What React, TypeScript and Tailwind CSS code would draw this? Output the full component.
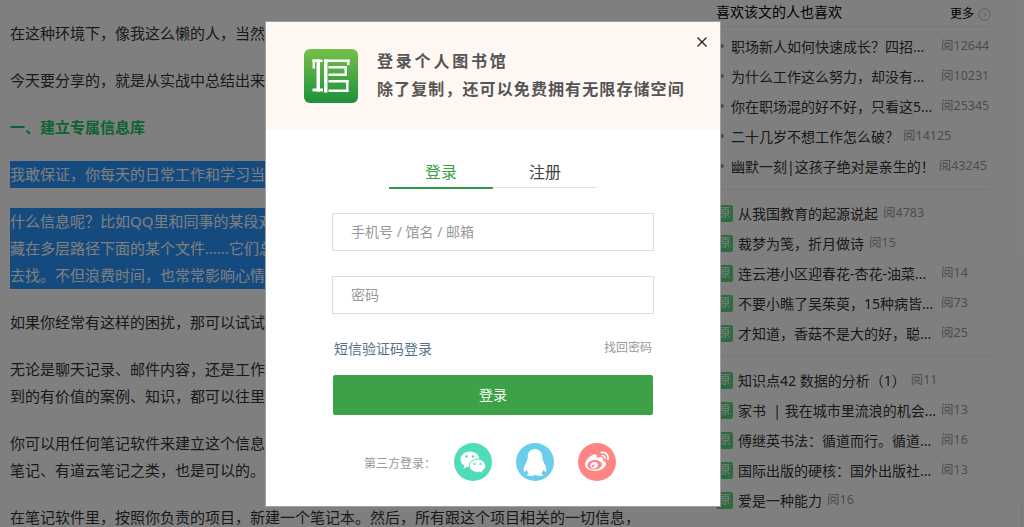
import { FaWeibo } from "react-icons/fa";

const fontStack = "font-['Noto_Sans','Noto_Sans_CJK_SC',sans-serif]";

type Item = { title: string; read: string; cut?: boolean };

const liked: Item[] = [
  { title: "职场新人如何快速成长？四招...", read: "阅12644", cut: true },
  { title: "为什么工作这么努力，却没有...", read: "阅10231", cut: true },
  { title: "你在职场混的好不好，只看这5...", read: "阅25345", cut: true },
  { title: "二十几岁不想工作怎么破？", read: "阅14125" },
  { title: "幽默一刻|这孩子绝对是亲生的！", read: "阅43245" },
];

const originalsA: Item[] = [
  { title: "从我国教育的起源说起", read: "阅4783" },
  { title: "裁梦为笺，折月做诗", read: "阅15" },
  { title: "连云港小区迎春花-杏花-油菜...", read: "阅14", cut: true },
  { title: "不要小瞧了吴茱萸，15种病皆...", read: "阅73", cut: true },
  { title: "才知道，香菇不是大的好，聪...", read: "阅25", cut: true },
];

const originalsB: Item[] = [
  { title: "知识点42 数据的分析（1）", read: "阅11" },
  { title: "家书\u00a0 | 我在城市里流浪的机会...", read: "阅13", cut: true },
  { title: "傅继英书法：循道而行。循道...", read: "阅16", cut: true },
  { title: "国际出版的硬核：国外出版社...", read: "阅13", cut: true },
  { title: "爱是一种能力", read: "阅16" },
];

function LikedRow({ title, read, cut }: Item) {
  return (
    <li className="relative flex h-[30px] items-center pl-[15px]">
      <span className="absolute left-[4px] top-[13px] h-[4px] w-[4px] rounded-full bg-[#999]" />
      <span className={`whitespace-nowrap text-[14px] text-[#333] ${cut ? "w-[206px]" : ""}`}>{title}</span>
      <span className="ml-[4px] shrink-0 whitespace-nowrap text-[12.5px] text-[#999]">{read}</span>
    </li>
  );
}

function OriginalRow({ title, read, cut }: Item) {
  return (
    <li className="flex h-[30px] items-center">
      <span className="mr-[5px] flex h-[17px] w-[17px] shrink-0 items-center justify-center rounded-[2px] bg-[#56d67e] text-[12px] text-white">
        原
      </span>
      <span className={`whitespace-nowrap text-[14px] text-[#333] ${cut ? "w-[198px]" : ""}`}>{title}</span>
      <span className="ml-[5px] shrink-0 whitespace-nowrap text-[12.5px] text-[#999]">{read}</span>
    </li>
  );
}

function Logo() {
  return (
    <svg width="54" height="54" viewBox="0 0 54 54" className="shrink-0 rounded-[6px]">
      <defs>
        <linearGradient id="logoGreen" x1="0" y1="0" x2="0" y2="1">
          <stop offset="0" stopColor="#76bf4c" />
          <stop offset="1" stopColor="#1b9139" />
        </linearGradient>
      </defs>
      <rect width="54" height="54" fill="url(#logoGreen)" />
      <g fill="#fff">
        <rect x="8.500" y="10.500" width="10" height="2.500" />
        <rect x="8.500" y="10.500" width="2.500" height="9" />
        <rect x="12.500" y="10.500" width="3.500" height="32" />
        <rect x="8.500" y="39.500" width="10.500" height="3" />
        <rect x="20" y="10.500" width="25.500" height="2.500" />
        <rect x="43" y="10.500" width="2.500" height="5.500" />
        <rect x="20" y="10.500" width="3.500" height="33" />
        <rect x="24.500" y="17" width="18" height="2.500" />
        <rect x="40.500" y="17" width="2.500" height="9.500" />
        <rect x="24.500" y="24.500" width="18" height="2.500" />
        <rect x="24.500" y="31" width="20" height="2.500" />
        <rect x="42" y="31" width="2.500" height="12" />
        <rect x="24.500" y="40.500" width="20" height="2.500" />
      </g>
    </svg>
  );
}

function WechatIcon() {
  return (
    <svg width="28" height="28" viewBox="0 0 28 28">
      <path d="M11 3.500C5.800 3.500 1.500 7 1.500 11.400c0 2.600 1.500 4.800 3.800 6.200l-.8 3.200 3.500-2c1 .3 2 .4 3 .4 5.200 0 9.500-3.500 9.500-7.800S16.200 3.500 11 3.500Z" fill="#fff" />
      <path d="M18.500 11c-4.400 0-8.200 3-8.200 6.700s3.800 6.700 8.200 6.700c.9 0 1.700-.1 2.500-.3l3 1.700-.7-2.700c2-1.200 3.300-3.200 3.300-5.400 0-3.700-3.700-6.700-8.100-6.700Z" fill="#fff" stroke="#4fdcbb" strokeWidth="1" />
      <circle cx="7.500" cy="8.500" r="1.300" fill="#4fdcbb" />
      <circle cx="14" cy="8.500" r="1.300" fill="#4fdcbb" />
      <circle cx="15.500" cy="16" r="1.100" fill="#4fdcbb" />
      <circle cx="21.500" cy="16" r="1.100" fill="#4fdcbb" />
    </svg>
  );
}

function QqIcon() {
  return (
    <svg width="24" height="28" viewBox="0 0 24 28" fill="#fff">
      <path d="M12 1C7.300 1 4.600 4.600 4.600 9.500c0 1.400-.2 2.500-.8 3.800C2.300 16.300.6 19.300.6 22c0 1.600.7 2 1.500 1.500.6-.3 1.200-1 1.700-1.700.3 1.500 1.100 2.700 2.200 3.700-1.200.4-2 .9-2 1.500 0 .7 1.300.9 3.400.9 2 0 3.500-.4 4.600-.9 1.100.5 2.600.9 4.600.9 2.100 0 3.400-.2 3.400-.9 0-.6-.8-1.100-2-1.500 1.100-1 1.900-2.200 2.200-3.700.5.700 1.100 1.400 1.700 1.700.8.500 1.500.1 1.500-1.500 0-2.700-1.700-5.700-3.200-8.700-.6-1.300-.8-2.400-.8-3.800C19.400 4.600 16.700 1 12 1Z" />
    </svg>
  );
}

export default function App() {
  return (
    <div lang="zh-CN" className={`relative h-[527px] w-[1024px] overflow-hidden bg-white ${fontStack}`}>
      <div className="flex">
        {/* article */}
        <div className="w-[716px] shrink-0 pl-[10px] pr-[60px] pt-[20px] text-[15px] leading-[27px] text-[#333]">
          <p className="mb-5 whitespace-nowrap">在这种环境下，像我这么懒的人，当然要想办法提高效率。</p>
          <p className="mb-5 whitespace-nowrap">今天要分享的，就是从实战中总结出来的方法。</p>
          <p className="mb-5 font-bold text-[#12c565]">一、建立专属信息库</p>
          <p className="mb-5 whitespace-nowrap bg-[#2a95ff] text-white">我敢保证，你每天的日常工作和学习当中，都有要反复查找的信息。</p>
          <div className="mb-5 bg-[#2a95ff] text-white">
            <p className="whitespace-nowrap">什么信息呢？比如QQ里和同事的某段对话，</p>
            <p className="whitespace-nowrap">藏在多层路径下面的某个文件......它们总是</p>
            <p className="whitespace-nowrap">去找。不但浪费时间，也常常影响心情。</p>
          </div>
          <p className="mb-5 whitespace-nowrap">如果你经常有这样的困扰，那可以试试建立一个信息库。</p>
          <div className="mb-5">
            <p className="whitespace-nowrap">无论是聊天记录、邮件内容，还是工作文档，</p>
            <p className="whitespace-nowrap">到的有价值的案例、知识，都可以往里面放。</p>
          </div>
          <div className="mb-5">
            <p className="whitespace-nowrap">你可以用任何笔记软件来建立这个信息库，</p>
            <p className="whitespace-nowrap">笔记、有道云笔记之类，也是可以的。</p>
          </div>
          <p className="whitespace-nowrap">在笔记软件里，按照你负责的项目，新建一个笔记本。然后，所有跟这个项目相关的一切信息，</p>
        </div>

        {/* sidebar */}
        <aside className="w-[275px] shrink-0">
          <div className="flex h-[27px] items-start justify-between border-b border-[#eee] pt-[1px]">
            <h3 className="text-[14px] leading-[22px] text-black">喜欢该文的人也喜欢</h3>
            <div className="mt-[3px] flex items-center gap-[4px] text-[12px] leading-[20px] text-black">
              更多
              <svg width="13" height="13" viewBox="0 0 13 13" fill="none" stroke="#bbb">
                <circle cx="6.500" cy="6.500" r="5.800" />
                <path d="M5.300 3.800 8 6.500 5.300 9.200" />
              </svg>
            </div>
          </div>
          <ul className="mt-[4px] border-b border-[#eee] pb-[8px]">
            {liked.map((item) => (
              <LikedRow key={item.title} {...item} />
            ))}
          </ul>
          <ul className="border-b border-[#eee] py-[8px]">
            {originalsA.map((item) => (
              <OriginalRow key={item.title} {...item} />
            ))}
          </ul>
          <ul className="pt-[8px]">
            {originalsB.map((item) => (
              <OriginalRow key={item.title} {...item} />
            ))}
          </ul>
        </aside>
      </div>

      {/* scrollbar corner */}
      <div className="absolute bottom-0 right-0 h-[26px] w-[3px] border-l border-t border-[#eee]" />

      {/* mask */}
      <div className="absolute inset-0 bg-black/50" />

      {/* login dialog */}
      <div className="absolute left-[266px] top-[22px] h-[484px] w-[454px] bg-white shadow-[0_0_0_1px_#a0a0a0]">
        <div className="flex h-[108px] items-center bg-[#fff8f2] pl-[38px]">
          <Logo />
          <div className="ml-[19px] mt-[-3px] font-bold text-[#555]">
            <p className="text-[16px] leading-[28px] tracking-[2.800px]">登录个人图书馆</p>
            <p className="text-[16px] leading-[28px] tracking-[1.100px]">除了复制，还可以免费拥有无限存储空间</p>
          </div>
        </div>
        <button className="absolute right-[13px] top-[15px] text-[#222]">
          <svg width="10" height="10" viewBox="0 0 10 10" stroke="currentColor" strokeWidth="1.300" className="block">
            <path d="M0.500 0.500 9.500 9.500M9.500 0.500 0.500 9.500" />
          </svg>
        </button>

        <div className="ml-[123px] mt-[28px] flex w-[208px] items-start text-[16px]">
          <div className="h-[31px] w-[104px] border-b-2 border-[#2f9c45] text-center leading-[29px] text-[#3ba24a]">登录</div>
          <div className="h-[30px] w-[104px] border-b border-[#e3e3e3] text-center leading-[29px] text-[#444]">注册</div>
        </div>

        <div className="ml-[66px] w-[322px]">
          <input
            placeholder="手机号 / 馆名 / 邮箱"
            className="mt-[24px] block h-[38px] w-full border border-[#ddd] px-[18px] pb-[2px] text-[14px] placeholder:text-[#999]"
          />
          <input
            placeholder="密码"
            className="mt-[25px] block h-[38px] w-full border border-[#ddd] px-[18px] pb-[2px] text-[14px] placeholder:text-[#999]"
          />
          <div className="mt-[24px] flex h-[20px] items-center justify-between px-[2px]">
            <span className="text-[14px] text-[#557088]">短信验证码登录</span>
            <span className="text-[12px] text-[#999]">找回密码</span>
          </div>
          <button className="ml-[1px] mt-[17px] block h-[40px] w-[320px] rounded-[2px] bg-[#3da247] pb-[2px] text-[14px] text-white">
            登录
          </button>
          <div className="mt-[28px] flex items-center pl-[32px]">
            <span className="mt-[4px] w-[90px] text-[12px] text-[#999]">第三方登录：</span>
            <div className="flex gap-[24px]">
              <span className="flex h-[38px] w-[38px] items-center justify-center rounded-full bg-[#4fdcbb]">
                <WechatIcon />
              </span>
              <span className="flex h-[38px] w-[38px] items-center justify-center rounded-full bg-[#6bcdea]">
                <QqIcon />
              </span>
              <span className="flex h-[38px] w-[38px] items-center justify-center rounded-full bg-[#ff8585] text-white">
                <FaWeibo size={24} />
              </span>
            </div>
          </div>
        </div>
      </div>
    </div>
  );
}
